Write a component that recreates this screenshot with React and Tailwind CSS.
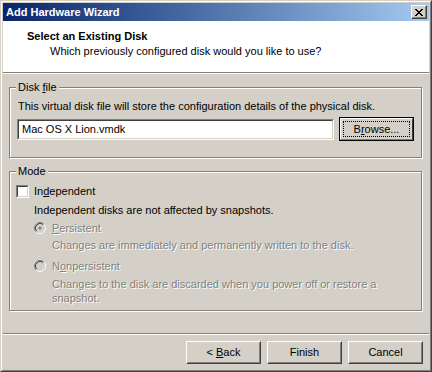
import React from "react";

const font = "font-['Liberation_Sans',Arial,sans-serif]";

function Radio({ checked }) {
  return (
    <svg width="12" height="12" viewBox="0 0 12 12" className="shrink-0">
      <circle cx="6" cy="6" r="4" fill="#D4D0C8" />
      <path d="M2.11 9.89 A5.5 5.5 0 0 1 9.89 2.11" stroke="#808080" fill="none" />
      <path d="M9.89 2.11 A5.5 5.5 0 0 1 2.11 9.89" stroke="#ffffff" fill="none" />
      <path d="M2.82 9.18 A4.5 4.5 0 0 1 9.18 2.82" stroke="#404040" fill="none" />
      <path d="M9.18 2.82 A4.5 4.5 0 0 1 2.82 9.18" stroke="#D4D0C8" fill="none" />
      {checked && <circle cx="6" cy="6" r="1.6" fill="#808080" />}
    </svg>
  );
}

function Button({ children, isDefault }) {
  const inner = (
    <div className="w-full h-full border border-t-white border-l-white border-r-[#404040] border-b-[#404040]">
      <div className="w-full h-full border border-t-[#D4D0C8] border-l-[#D4D0C8] border-r-[#808080] border-b-[#808080] flex items-center justify-center text-[11px] text-black">
        {children}
      </div>
    </div>
  );
  if (isDefault) {
    return (
      <div className="w-[75px] h-[24px] border border-black">
        <div className="w-full h-full border border-t-white border-l-white border-r-[#404040] border-b-[#808080]">
          <div className="w-full h-full p-[2px]">
            <div className="w-full h-full border border-dotted border-black flex items-center justify-center text-[11px] text-black">
              {children}
            </div>
          </div>
        </div>
      </div>
    );
  }
  return <div className="w-[75px] h-[23px]">{inner}</div>;
}

function Group({ label, className, children }) {
  return (
    <div
      className={
        "relative border border-[#808080] shadow-[inset_1px_1px_0_#ffffff,1px_1px_0_#ffffff] " +
        className
      }
    >
      <div className="absolute left-[6px] -top-[8px] bg-[#D4D0C8] px-[2px] text-[11px] leading-[14px] text-black">
        {label}
      </div>
      {children}
    </div>
  );
}

const disabledText = "text-[#808080] [text-shadow:1px_1px_0_#ffffff]";

export default function App() {
  return (
    <div className={`${font} w-[432px] h-[372px] bg-[#D4D0C8] border border-t-[#D4D0C8] border-l-[#D4D0C8] border-r-[#404040] border-b-[#404040]`}>
      <div className="h-full border border-t-white border-l-white border-r-[#808080] border-b-[#808080] p-px flex flex-col">
        {/* Title bar */}
        <div className="h-[18px] shrink-0 flex items-center justify-between pl-[3px] pr-[2px] bg-linear-to-r from-[#0A246A] to-[#A6CAF0]">
          <span className="text-white font-bold text-[11px] leading-[14px]">Add Hardware Wizard</span>
          <div className="w-[16px] h-[14px] border border-t-white border-l-white border-r-[#404040] border-b-[#404040] bg-[#D4D0C8]">
            <div className="w-full h-full border border-t-[#D4D0C8] border-l-[#D4D0C8] border-r-[#808080] border-b-[#808080] flex items-center justify-center">
              <svg width="8" height="7" viewBox="0 0 8 7">
                <path d="M0 0h2v1h1v1h2v-1h1v-1h2v1h-1v1h-1v1h-1v1h1v1h1v1h1v1h-2v-1h-1v-1h-2v1h-1v1h-2v-1h1v-1h1v-1h1v-1h-1v-1h-1v-1h-1z" fill="#000" />
              </svg>
            </div>
          </div>
        </div>

        {/* Header */}
        <div className="h-[52px] shrink-0 bg-white pt-[8px] border-b border-b-[#808080]">
          <div className="pl-[24px] font-bold text-[11px] leading-[14px] text-black">Select an Existing Disk</div>
          <div className="pl-[47px] text-[11px] leading-[14px] text-black mt-px">
            Which previously configured disk would you like to use?
          </div>
        </div>
        <div className="h-px bg-white shrink-0" />

        {/* Body */}
        <div className="flex-1 pl-[6px] pr-[7px] pt-[13px]">
          <Group label={<span>Disk <u>f</u>ile</span>} className="h-[71px]">
            <div className="pt-[11px] pl-[8px] text-[11px] leading-[14px] text-black">
              This virtual disk file will store the configuration details of the physical disk.
            </div>
            <div className="flex items-center pl-[7px] mt-[4px] gap-[5px]">
              <div className="w-[317px] h-[21px] border border-t-[#808080] border-l-[#808080] border-r-white border-b-white">
                <div className="w-full h-full bg-white border border-t-[#404040] border-l-[#404040] border-r-[#D4D0C8] border-b-[#D4D0C8] flex items-center pl-[3px] text-[11px] text-black">
                  Mac OS X Lion.vmdk
                </div>
              </div>
              <Button isDefault>
                <span>
                  B<u>r</u>owse...
                </span>
              </Button>
            </div>
          </Group>

          <Group label="Mode" className="h-[140px] mt-[13px]">
            <div className="flex flex-col pt-[12px] text-[11px] leading-[14px]">
              <div className="h-[14px] flex items-center pl-[6px]">
                <div className="w-[13px] h-[13px] border border-t-[#808080] border-l-[#808080] border-r-white border-b-white">
                  <div className="w-full h-full bg-white border border-t-[#404040] border-l-[#404040] border-r-[#D4D0C8] border-b-[#D4D0C8]" />
                </div>
                <span className="ml-[5px] text-black">
                  In<u>d</u>ependent
                </span>
              </div>
              <div className="h-[14px] mt-[5px] pl-[24px] text-black">
                Independent disks are not affected by snapshots.
              </div>
              <div className="h-[14px] mt-[4px] flex items-center pl-[24px]">
                <Radio checked />
                <span className={`ml-[6px] ${disabledText}`}>
                  <u>P</u>ersistent
                </span>
              </div>
              <div className={`h-[14px] mt-[3px] pl-[42px] ${disabledText}`}>
                Changes are immediately and permanently written to the disk.
              </div>
              <div className="h-[14px] mt-[7px] flex items-center pl-[24px]">
                <Radio />
                <span className={`ml-[6px] ${disabledText}`}>
                  N<u>o</u>npersistent
                </span>
              </div>
              <div className={`mt-[4px] pl-[42px] pr-[20px] ${disabledText}`}>
                Changes to the disk are discarded when you power off or restore a snapshot.
              </div>
            </div>
          </Group>
        </div>

        {/* Separator */}
        <div className="h-px bg-[#808080] shrink-0" />
        <div className="h-px bg-white shrink-0" />

        {/* Footer */}
        <div className="h-[34px] shrink-0 flex justify-end items-start pt-[6px] pr-[6px] gap-[6px]">
          <Button>
            <span>
              &lt; <u>B</u>ack
            </span>
          </Button>
          <Button>Finish</Button>
          <Button>Cancel</Button>
        </div>
      </div>
    </div>
  );
}
